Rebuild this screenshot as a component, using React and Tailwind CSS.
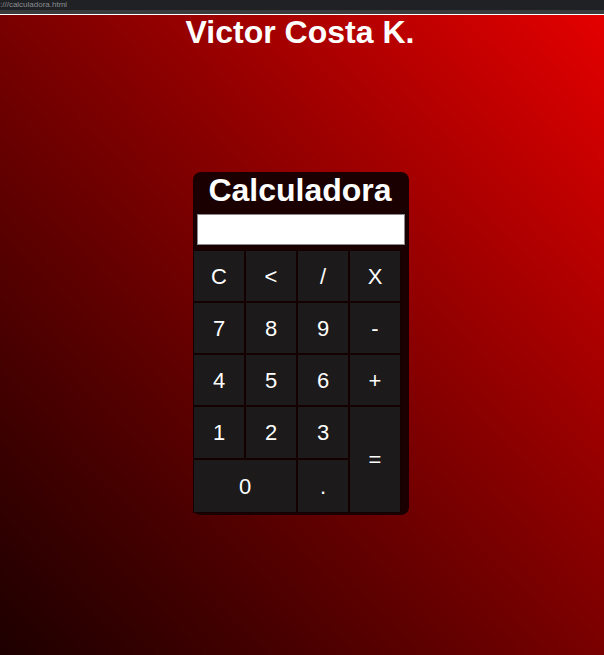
import React from 'react';

const keys = [
  { label: 'C' },
  { label: '<' },
  { label: '/' },
  { label: 'X' },
  { label: '7' },
  { label: '8' },
  { label: '9' },
  { label: '-' },
  { label: '4' },
  { label: '5' },
  { label: '6' },
  { label: '+' },
  { label: '1' },
  { label: '2' },
  { label: '3' },
  { label: '=', span: 'row-span-2' },
  { label: '0', span: 'col-span-2' },
  { label: '.' },
];

const App = () => {
  return (
    <div className="flex h-[655px] w-[604px] flex-col overflow-hidden font-['Liberation_Sans',Arial,sans-serif]">
      {/* Browser chrome strip */}
      <div className="h-[10px] shrink-0 overflow-hidden bg-[#202124]">
        <p className="text-[8px] leading-[9px] text-[#8a8d91]">:///calculadora.html</p>
      </div>
      <div className="h-[4px] shrink-0 bg-[#3a3b3d]" />
      <div className="h-[1px] shrink-0 bg-white" />

      {/* Page */}
      <div className="flex flex-1 flex-col items-center bg-linear-to-tr from-[#1e0000] to-[#e40000]">
        <h1 className="-mt-[1px] mr-[4px] text-[32px] font-bold leading-[37px] text-white">Victor Costa K.</h1>

        <div className="mr-[2px] mt-[121px] flex w-[216px] flex-col rounded-[8px] bg-[#1a0000] pb-[2px] pr-[8px]">
          <h2 className="ml-[6px] text-center text-[32px] font-bold leading-[37px] text-white">Calculadora</h2>
          <input
            type="text"
            readOnly
            className="ml-[4px] mt-[5px] h-[31px] w-[208px] border border-[#8a8a8a] bg-white outline-none"
          />
          <div className="mt-[5px] grid grid-cols-[repeat(4,52px)] grid-rows-[52px_52px_52px_53px_54px]">
            {keys.map((k) => (
              <button
                key={k.label}
                className={`flex items-center justify-center border border-[#140000] bg-[#1c1a1a] text-[22px] text-white ${k.span || ''}`}
              >
                {k.label}
              </button>
            ))}
          </div>
        </div>
      </div>
    </div>
  );
};

export default App;
